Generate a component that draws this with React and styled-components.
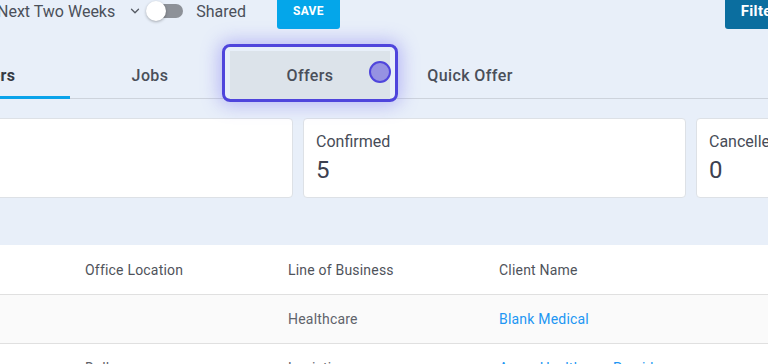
import styled, { createGlobalStyle } from "styled-components";
import { ChevronDown } from "lucide-react";

const GlobalStyle = createGlobalStyle`
  html, body {
    margin: 0;
    padding: 0;
    background: #e8eff9;
    font-family: Roboto, "Noto Sans", Arial, sans-serif;
    overflow: hidden;
  }
`;

const Page = styled.div`
  width: 768px;
  height: 364px;
  overflow: hidden;
  background: #e8eff9;
`;

const Toolbar = styled.div`
  display: flex;
  align-items: center;
  height: 36px;
  margin: -7px 0 0 -3px;
  white-space: nowrap;
  & > * {
    flex-shrink: 0;
  }
`;

const RangeSelect = styled.div`
  display: flex;
  align-items: center;
  gap: 13px;
  font-size: 16px;
  color: #4b505a;
  svg {
    color: #555a63;
  }
`;

const Switch = styled.div`
  position: relative;
  width: 32px;
  height: 14px;
  margin-left: 9px;
  border-radius: 7px;
  background: #8d9198;
  &::before {
    content: "";
    position: absolute;
    left: -5px;
    top: -3px;
    width: 20px;
    height: 20px;
    border-radius: 50%;
    background: #fff;
    box-shadow: 0 1px 3px rgba(0, 0, 0, 0.3);
  }
`;

const SwitchLabel = styled.span`
  margin-left: 13px;
  font-size: 16px;
  color: #4b505a;
`;

const Button = styled.button`
  height: 36px;
  border: none;
  border-radius: 3px;
  color: #fff;
  font-family: inherit;
  font-weight: 700;
  background: ${(p) => (p.$dark ? "#0b6e9f" : "#04a6ea")};
  font-size: ${(p) => (p.$dark ? "15px" : "12px")};
  padding: 0 16px;
  margin-left: ${(p) => p.$ml}px;
  letter-spacing: 0.3px;
  text-transform: ${(p) => (p.$dark ? "none" : "uppercase")};
`;

const Content = styled.div`
  margin-left: -90px;
  width: 1400px;
`;

const Tabs = styled.div`
  display: flex;
  margin-top: 22px;
  border-bottom: 1px solid #cdd3dc;
`;

const Tab = styled.div`
  position: relative;
  width: 160px;
  height: 48px;
  display: flex;
  align-items: center;
  justify-content: center;
  font-size: 16px;
  font-weight: ${(p) => (p.$active ? 700 : 500)};
  color: ${(p) => (p.$active ? "#353a44" : "#4a4f5a")};
  letter-spacing: 0.4px;
  background: ${(p) => (p.$focus ? "#dce3ea" : "transparent")};
  border-bottom: 3px solid ${(p) => (p.$active ? "#0aa3ea" : "transparent")};
  margin-bottom: -1px;
  box-sizing: border-box;
  padding-top: 3px;

  ${(p) =>
    p.$focus &&
    `
    &::after {
      content: "";
      position: absolute;
      inset: -7px -8px -6px -8px;
      border: 3px solid #4f45dc;
      border-radius: 8px;
      box-shadow: 0 0 18px 3px rgba(110, 100, 240, 0.4);
      pointer-events: none;
    }
  `}
`;

const FocusDot = styled.span`
  position: absolute;
  right: -1px;
  top: 10px;
  width: 18px;
  height: 18px;
  border-radius: 50%;
  background: #9692e2;
  border: 2px solid #4f45dc;
`;

const Cards = styled.div`
  display: flex;
  gap: 10px;
  margin-top: 19px;
`;

const Card = styled.div`
  width: 383px;
  height: 80px;
  box-sizing: border-box;
  padding: 13px 12px;
  background: #fff;
  border: 1px solid #dde1e6;
  border-radius: 4px;
`;

const CardLabel = styled.div`
  font-size: 16px;
  line-height: 19px;
  color: #474c57;
`;

const CardValue = styled.div`
  margin-top: 5px;
  font-size: 24px;
  line-height: 28px;
  color: #3c4150;
`;

const Table = styled.div`
  margin-top: 47px;
  background: #fff;
`;

const Row = styled.div`
  display: grid;
  grid-template-columns: 159px 203px 211px 300px 1fr;
  height: ${(p) => (p.$head ? 49 : 48)}px;
  align-items: center;
  background: ${(p) => (p.$alt ? "#fafafa" : "#fff")};
  border-bottom: 1px solid #e0e0e0;
`;

const Cell = styled.div`
  padding-left: 16px;
  font-size: 14px;
  letter-spacing: 0.2px;
  white-space: nowrap;
  color: ${(p) => (p.$link ? "#2196f3" : p.$head ? "#4f535b" : "#5f636b")};
`;

const App = () => {
  const tabs = ["Orders", "Jobs", "Offers", "Quick Offer"];
  const cards = [
    { label: "", value: "" },
    { label: "Confirmed", value: "5" },
    { label: "Cancelled", value: "0" },
  ];
  const rows = [
    ["", "", "Healthcare", "Blank Medical"],
    ["", "Dallas", "Logistics", "Acme Healthcare Providers"],
  ];

  return (
    <Page>
      <GlobalStyle />
      <Toolbar>
        <RangeSelect>
          Next Two Weeks
          <ChevronDown size={14} strokeWidth={2.2} />
        </RangeSelect>
        <Switch />
        <SwitchLabel>Shared</SwitchLabel>
        <Button $ml={31}>Save</Button>
        <Button $dark $ml={385}>
          Filters
        </Button>
      </Toolbar>
      <Content>
        <Tabs>
          {tabs.map((t, i) => (
            <Tab key={t} $active={i === 0} $focus={i === 2}>
              {t}
              {i === 2 && <FocusDot />}
            </Tab>
          ))}
        </Tabs>
        <Cards>
          {cards.map((c, i) => (
            <Card key={i}>
              <CardLabel>{c.label}</CardLabel>
              <CardValue>{c.value}</CardValue>
            </Card>
          ))}
        </Cards>
        <Table>
          <Row $head>
            <Cell $head />
            <Cell $head>Office Location</Cell>
            <Cell $head>Line of Business</Cell>
            <Cell $head>Client Name</Cell>
            <Cell $head />
          </Row>
          {rows.map((r, i) => (
            <Row key={i} $alt={i % 2 === 0}>
              <Cell>{r[0]}</Cell>
              <Cell>{r[1]}</Cell>
              <Cell>{r[2]}</Cell>
              <Cell $link>{r[3]}</Cell>
              <Cell />
            </Row>
          ))}
        </Table>
      </Content>
    </Page>
  );
};

export default App;
